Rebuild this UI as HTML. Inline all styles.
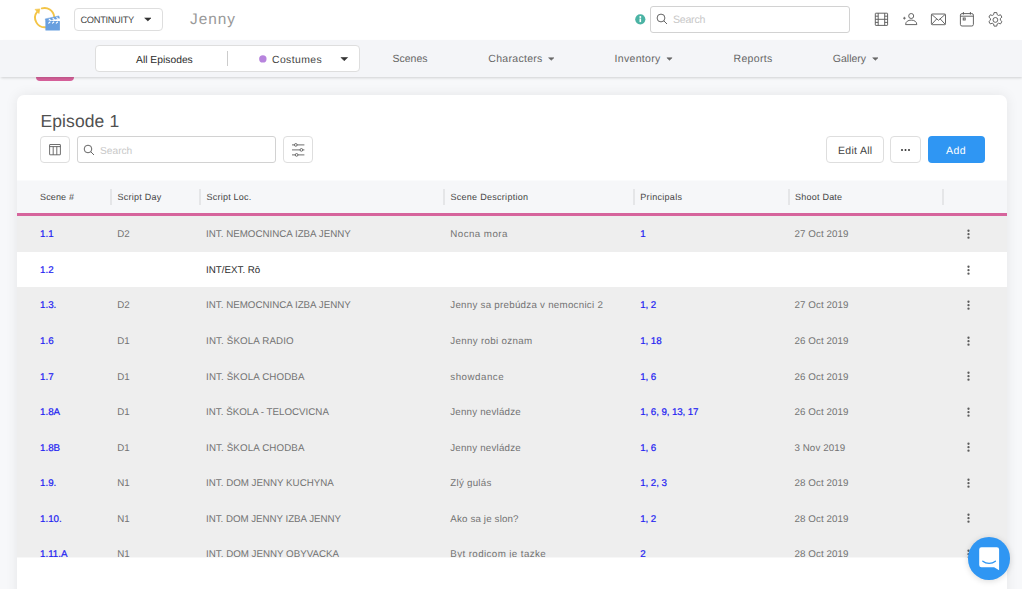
<!DOCTYPE html>
<html lang="en">
<head>
<meta charset="utf-8">
<title>Jenny - Continuity</title>
<style>
*{box-sizing:border-box;margin:0;padding:0}
html,body{width:1022px;height:589px;overflow:hidden}
body{background:#f7f8fa;font-family:"Liberation Sans",sans-serif;color:#555;position:relative;text-rendering:geometricPrecision}
.abs{position:absolute}
#header{position:absolute;left:0;top:0;width:1022px;height:40px;background:#fff}
#nav{position:absolute;left:0;top:40px;width:1022px;height:37px;background:#f4f5f8;box-shadow:0 1.5px 2.5px -0.5px rgba(0,0,0,.16);z-index:3}
.t{position:absolute;white-space:nowrap;line-height:1}
.btn{position:absolute;border:1px solid #dedede;border-radius:4px;background:#fff}
#card{position:absolute;left:17px;top:94.700px;width:990.300px;height:520px;background:#fff;border-radius:7px;box-shadow:0 0 13px rgba(0,0,0,.08)}
#thead{position:absolute;left:17px;top:181px;width:990.400px;height:32px;background:#f6f7f9}
#pink{position:absolute;left:17px;top:213px;width:990.400px;height:3px;background:#d6649c}
.sep{position:absolute;top:189px;width:2px;height:16px;background:#e5e6e8}
.th{position:absolute;top:192px;font-size:9px;color:#444;white-space:nowrap;line-height:10px;letter-spacing:.23px}
#tbody{position:absolute;left:17px;top:216px;width:990.400px;height:342px;overflow:hidden}
.row{position:relative;height:35.55px;background:#eee;width:991px}
.row.w{background:#fff}
.row span{position:absolute;top:13.400px;font-size:9.750px;line-height:12px;white-space:nowrap;color:#737373}
.row.w span{color:#2e2e2e}
.row span.l{color:#2222f2 !important;-webkit-text-stroke:0.22px #2222f2}
.c1{left:23px}.c2{left:100.200px}.c3{left:189.100px}.c4{left:433.300px}.c5{left:623.300px;letter-spacing:-0.100px}.c6{left:777.400px;letter-spacing:0.100px}
.kb{position:absolute;left:949px;top:12px;fill:#5c5c5c}
</style>
</head>
<body>

<div id="header">
  <!-- logo -->
  <svg class="abs" style="left:28px;top:2px" width="40" height="34" viewBox="28 2 40 34">
    <path d="M41.8 8.4 A9.6 9.6 0 0 1 54.1 16.4" fill="none" stroke="#f3c446" stroke-width="1.9" stroke-linecap="round"/>
    <path d="M46 27.2 A9.6 9.6 0 0 1 37.3 11.6" fill="none" stroke="#f3c446" stroke-width="1.9"/>
    <path d="M35 9.4 L39.8 8.9 L39 13.600 Z" fill="#f3c446" stroke="#f3c446" stroke-width="0.6" stroke-linejoin="round"/>
    <rect x="45.4" y="20.9" width="14.5" height="9.7" rx="0.6" fill="#689fdf"/>
    <path d="M45.2 18.9 L58.9 15.9 L59.5 18.3 L45.8 21.3 Z" fill="#689fdf" stroke="#689fdf" stroke-width="0.5" stroke-linejoin="round"/>
    <path d="M49.2 19.3l1.3 1M53 18.5l1.3 1M56.8 17.6l1.300 1" stroke="#fff" stroke-width="1.1" stroke-linecap="round"/>
    <path d="M50 22l-1.300 1.100M53.800 22l-1.300 1.100M57.600 22l-1.300 1.100" stroke="#fff" stroke-width="1.100" stroke-linecap="round"/>
  </svg>
  <div class="btn" style="left:74px;top:8px;width:88.5px;height:23px;border-radius:4px"></div>
  <div class="t" style="left:80.500px;top:15.600px;font-size:9.300px;color:#444;letter-spacing:-0.340px">CONTINUITY</div>
  <svg class="abs" style="left:142px;top:15px" width="12" height="9" viewBox="142 15 12 9"><path d="M144.70 18.00H151.00L147.85 20.90Z" fill="#333" stroke="#333" stroke-width="0.6" stroke-linejoin="round"/></svg>
  <div class="t" style="left:190px;top:12.1px;font-size:15.400px;color:#999;letter-spacing:1px">Jenny</div>

  <!-- info dot -->
  <svg class="abs" style="left:635px;top:14px" width="11" height="11" viewBox="0 0 11 11"><circle cx="5.300" cy="5.300" r="5.100" fill="#4bb3a4"/><rect x="4.500" y="4.500" width="1.600" height="3.600" fill="#fff"/><circle cx="5.300" cy="2.900" r="1" fill="#fff"/></svg>
  <div class="btn" style="left:650px;top:5.500px;width:200px;height:27px;border-radius:3px;border-color:#d2d2d2"></div>
  <svg class="abs" style="left:656px;top:13.100px" width="12" height="12" viewBox="0 0 12 12"><circle cx="5" cy="5" r="3.900" fill="none" stroke="#555" stroke-width="0.900"/><path d="M7.800 7.800L11 11" stroke="#555" stroke-width="0.900"/></svg>
  <div class="t" style="left:673px;top:15px;font-size:10.600px;color:#c8c8c8;letter-spacing:-0.250px">Search</div>

  <!-- right icons -->
  <svg class="abs" style="left:872px;top:10px" width="20" height="20" viewBox="872 10 20 20" fill="none" stroke="#555" stroke-width="0.9">
    <rect x="875.3" y="13.2" width="12.3" height="12.200" rx="0.500"/><path d="M878.200 13.200v12.200M884.700 13.200v12.200M878.200 19.300h6.500M875.300 16.200h2.900M875.300 19.300h2.900M875.300 22.400h2.900M884.700 16.200h2.900M884.700 19.300h2.900M884.700 22.400h2.900"/>
  </svg>
  <svg class="abs" style="left:902px;top:12px" width="16" height="15" viewBox="0 0 16 15" fill="none" stroke="#555" stroke-width="0.9">
    <circle cx="9.2" cy="4.000" r="2.500"/><path d="M3.600 12.600c0-3 2.500-4.500 5.600-4.500s5.600 1.500 5.600 4.500z" stroke-linejoin="round"/><path d="M1 6.200h2.800M2.400 4.800v2.800" stroke-width="0.800"/>
  </svg>
  <svg class="abs" style="left:930px;top:12px" width="17" height="15" viewBox="0 0 17 15" fill="none" stroke="#555" stroke-width="0.900">
    <rect x="1.400" y="2" width="14.100" height="10.700" rx="1"/><path d="M1.700 2.400L8.450 8.300L15.200 2.400M1.700 12.300L6.700 6.900M15.200 12.300L10.200 6.900"/>
  </svg>
  <svg class="abs" style="left:959px;top:11px" width="16" height="17" viewBox="0 0 16 17" fill="none" stroke="#555" stroke-width="0.900">
    <rect x="1.400" y="2.600" width="13" height="12.400" rx="1.600"/><path d="M1.400 5.200h13M4.400 1v2.600M11.400 1v2.600"/><rect x="4.200" y="7" width="2" height="2"/>
  </svg>
  <svg class="abs" style="left:986.600px;top:10.700px" width="16.800" height="17.850" viewBox="0 0 16 17" fill="none" stroke="#555" stroke-width="0.850">
    <circle cx="8" cy="8.500" r="2.300"/>
    <path d="M6.700 1.500h2.600l.4 2 1.300.750 1.900-.650 1.300 2.250-1.500 1.350v1.500l1.500 1.350-1.300 2.250-1.900-.650-1.300.750-.4 2H6.700l-.4-2-1.300-.750-1.900.650-1.300-2.250 1.500-1.350v-1.500L1.800 5.850l1.300-2.250 1.900.650 1.300-.750z" stroke-linejoin="round"/>
  </svg>
</div>

<div id="nav">
  <div class="btn" style="left:95px;top:4.600px;width:265px;height:27px;border-radius:4px;border-color:#dedede"></div>
  <div class="abs" style="left:227px;top:11px;width:1px;height:15px;background:#ccc"></div>
  <div class="t" style="left:136px;top:16px;font-size:10.300px;color:#2c2c2c;letter-spacing:0.010px">All Episodes</div>
  <svg class="abs" style="left:257px;top:13px" width="12" height="12" viewBox="257 53 12 12"><circle cx="262.850" cy="58.900" r="3.700" fill="#b784dd"/></svg>
  <div class="t" style="left:272px;top:16px;font-size:10.400px;color:#444;letter-spacing:0.420px">Costumes</div>
  <svg class="abs" style="left:338px;top:15px" width="12" height="9" viewBox="338 15 12 9"><path d="M341.00 17.50H347.60L344.30 20.80Z" fill="#333" stroke="#333" stroke-width="0.6" stroke-linejoin="round"/></svg>
  <div class="t" style="left:392.500px;top:13.9px;font-size:10.500px;color:#666">Scenes</div>
  <div class="t" style="left:488.300px;top:13.9px;font-size:10.500px;color:#666;letter-spacing:0.300px">Characters</div>
  <svg class="abs" style="left:546px;top:15px" width="12" height="9" viewBox="546 15 12 9"><path d="M548.60 17.80H553.90L551.25 20.30Z" fill="#666" stroke="#666" stroke-width="0.6" stroke-linejoin="round"/></svg>
  <div class="t" style="left:614.500px;top:13.9px;font-size:10.500px;color:#666;letter-spacing:0.320px">Inventory</div>
  <svg class="abs" style="left:664px;top:15px" width="12" height="9" viewBox="664 15 12 9"><path d="M666.90 17.80H672.10L669.50 20.30Z" fill="#666" stroke="#666" stroke-width="0.6" stroke-linejoin="round"/></svg>
  <div class="t" style="left:733.500px;top:13.9px;font-size:10.500px;color:#666;letter-spacing:0.350px">Reports</div>
  <div class="t" style="left:832.800px;top:13.9px;font-size:10.500px;color:#666">Gallery</div>
  <svg class="abs" style="left:870px;top:15px" width="12" height="9" viewBox="870 15 12 9"><path d="M872.70 17.80H878.00L875.35 20.30Z" fill="#666" stroke="#666" stroke-width="0.6" stroke-linejoin="round"/></svg>
</div>
<div class="abs" style="left:36px;top:70px;width:38px;height:11px;border-radius:4px;background:#d6609a;z-index:2"></div>

<div id="card"></div>
<div class="t" style="left:40.500px;top:112.9px;font-size:17.500px;color:#505050;letter-spacing:0.100px">Episode 1</div>

<div class="btn" style="left:40px;top:136px;width:30px;height:27px"></div>
<svg class="abs" style="left:46px;top:141px" width="18" height="18" viewBox="46 141 18 18" fill="none" stroke="#555" stroke-width="0.850"><rect x="49.600" y="144.500" width="10.800" height="10.300" rx="0.300"/><path d="M49.600 146.600h10.800M53.200 146.600v8.200M56.800 146.600v8.200"/></svg>
<div class="btn" style="left:77px;top:136px;width:199px;height:27px;border-radius:3px;border-color:#d2d2d2"></div>
<svg class="abs" style="left:83px;top:144px" width="12" height="12" viewBox="0 0 12 12"><circle cx="5" cy="5" r="3.800" fill="none" stroke="#555" stroke-width="0.900"/><path d="M7.800 7.800L11 11" stroke="#555" stroke-width="0.900"/></svg>
<div class="t" style="left:100px;top:146.5px;font-size:10.200px;color:#c8c8c8">Search</div>
<div class="btn" style="left:283px;top:136px;width:30px;height:27px"></div>
<svg class="abs" style="left:289px;top:141px" width="18" height="18" viewBox="289 141 18 18" fill="none" stroke="#555" stroke-width="0.850"><path d="M292 144.900h12.400M292 149.900h12.400M292 154.900h12.400"/><circle cx="295.800" cy="144.900" r="1.350" fill="#fff"/><circle cx="301.400" cy="149.900" r="1.350" fill="#fff"/><circle cx="296.600" cy="154.900" r="1.350" fill="#fff"/></svg>

<div class="btn" style="left:826px;top:136px;width:58px;height:27px"></div>
<div class="t" style="left:838px;top:146px;font-size:10.500px;color:#444;letter-spacing:0.300px">Edit All</div>
<div class="btn" style="left:890px;top:136px;width:31px;height:27px"></div>
<div class="abs" style="left:901px;top:149px;width:2px;height:2px;border-radius:1px;background:#333;box-shadow:3.500px 0 0 #333,7px 0 0 #333"></div>
<div class="abs" style="left:928px;top:136px;width:57px;height:27px;border-radius:4px;background:#2f96f3"></div>
<div class="t" style="left:946px;top:146px;font-size:10.500px;color:#fff;letter-spacing:0.400px">Add</div>

<div class="abs" style="left:17px;top:180px;width:990.300px;height:1px;background:#f6f7f9;opacity:.55"></div>
<div id="thead"></div>
<div id="pink"></div>
<div class="th" style="left:40px;letter-spacing:.150px">Scene #</div>
<div class="sep" style="left:110px"></div>
<div class="th" style="left:117.600px">Script Day</div>
<div class="sep" style="left:199px"></div>
<div class="th" style="left:206.500px">Script Loc.</div>
<div class="sep" style="left:443px"></div>
<div class="th" style="left:450.400px;letter-spacing:.290px">Scene Description</div>
<div class="sep" style="left:633px"></div>
<div class="th" style="left:640.300px;letter-spacing:.290px">Principals</div>
<div class="sep" style="left:788px"></div>
<div class="th" style="left:795px">Shoot Date</div>
<div class="sep" style="left:942px"></div>

<div id="tbody">
  <div class="row"><span class="c1 l">1.1</span><span class="c2">D2</span><span class="c3">INT. NEMOCNINCA IZBA JENNY</span><span class="c4" style="letter-spacing:0.44px">Nocna mora</span><span class="c5 l">1</span><span class="c6">27 Oct 2019</span><svg class="kb" width="5" height="13" viewBox="0 0 5 13"><circle cx="2.500" cy="2.750" r="1.150"/><circle cx="2.500" cy="6.200" r="1.150"/><circle cx="2.500" cy="9.700" r="1.150"/></svg></div>
  <div class="row w"><span class="c1 l">1.2</span><span class="c2"></span><span class="c3">INT/EXT. Rô</span><span class="c4"></span><span class="c5 l"></span><span class="c6"></span><svg class="kb" width="5" height="13" viewBox="0 0 5 13"><circle cx="2.500" cy="2.750" r="1.150"/><circle cx="2.500" cy="6.200" r="1.150"/><circle cx="2.500" cy="9.700" r="1.150"/></svg></div>
  <div class="row"><span class="c1 l">1.3.</span><span class="c2">D2</span><span class="c3">INT. NEMOCNINCA IZBA JENNY</span><span class="c4" style="letter-spacing:0.26px">Jenny sa prebúdza v nemocnici 2</span><span class="c5 l">1, 2</span><span class="c6">27 Oct 2019</span><svg class="kb" width="5" height="13" viewBox="0 0 5 13"><circle cx="2.500" cy="2.750" r="1.150"/><circle cx="2.500" cy="6.200" r="1.150"/><circle cx="2.500" cy="9.700" r="1.150"/></svg></div>
  <div class="row"><span class="c1 l">1.6</span><span class="c2">D1</span><span class="c3" style="letter-spacing:0.13px">INT. ŠKOLA RADIO</span><span class="c4" style="letter-spacing:0.33px">Jenny robi oznam</span><span class="c5 l">1, 18</span><span class="c6">26 Oct 2019</span><svg class="kb" width="5" height="13" viewBox="0 0 5 13"><circle cx="2.500" cy="2.750" r="1.150"/><circle cx="2.500" cy="6.200" r="1.150"/><circle cx="2.500" cy="9.700" r="1.150"/></svg></div>
  <div class="row"><span class="c1 l">1.7</span><span class="c2">D1</span><span class="c3" style="letter-spacing:0.12px">INT. ŠKOLA CHODBA</span><span class="c4" style="letter-spacing:0.50px">showdance</span><span class="c5 l">1, 6</span><span class="c6">26 Oct 2019</span><svg class="kb" width="5" height="13" viewBox="0 0 5 13"><circle cx="2.500" cy="2.750" r="1.150"/><circle cx="2.500" cy="6.200" r="1.150"/><circle cx="2.500" cy="9.700" r="1.150"/></svg></div>
  <div class="row"><span class="c1 l">1.8A</span><span class="c2">D1</span><span class="c3">INT. ŠKOLA - TELOCVICNA</span><span class="c4" style="letter-spacing:0.20px">Jenny nevládze</span><span class="c5 l">1, 6, 9, 13, 17</span><span class="c6">26 Oct 2019</span><svg class="kb" width="5" height="13" viewBox="0 0 5 13"><circle cx="2.500" cy="2.750" r="1.150"/><circle cx="2.500" cy="6.200" r="1.150"/><circle cx="2.500" cy="9.700" r="1.150"/></svg></div>
  <div class="row"><span class="c1 l">1.8B</span><span class="c2">D1</span><span class="c3" style="letter-spacing:0.12px">INT. ŠKOLA CHODBA</span><span class="c4" style="letter-spacing:0.20px">Jenny nevládze</span><span class="c5 l">1, 6</span><span class="c6">3 Nov 2019</span><svg class="kb" width="5" height="13" viewBox="0 0 5 13"><circle cx="2.500" cy="2.750" r="1.150"/><circle cx="2.500" cy="6.200" r="1.150"/><circle cx="2.500" cy="9.700" r="1.150"/></svg></div>
  <div class="row"><span class="c1 l">1.9.</span><span class="c2">N1</span><span class="c3">INT. DOM JENNY KUCHYNA</span><span class="c4" style="letter-spacing:0.25px">Zlý gulás</span><span class="c5 l">1, 2, 3</span><span class="c6">28 Oct 2019</span><svg class="kb" width="5" height="13" viewBox="0 0 5 13"><circle cx="2.500" cy="2.750" r="1.150"/><circle cx="2.500" cy="6.200" r="1.150"/><circle cx="2.500" cy="9.700" r="1.150"/></svg></div>
  <div class="row"><span class="c1 l">1.10.</span><span class="c2">N1</span><span class="c3" style="letter-spacing:-0.04px">INT. DOM JENNY IZBA JENNY</span><span class="c4" style="letter-spacing:0.15px">Ako sa je slon?</span><span class="c5 l">1, 2</span><span class="c6">28 Oct 2019</span><svg class="kb" width="5" height="13" viewBox="0 0 5 13"><circle cx="2.500" cy="2.750" r="1.150"/><circle cx="2.500" cy="6.200" r="1.150"/><circle cx="2.500" cy="9.700" r="1.150"/></svg></div>
  <div class="row"><span class="c1 l">1.11.A</span><span class="c2">N1</span><span class="c3">INT. DOM JENNY OBYVACKA</span><span class="c4" style="letter-spacing:0.40px">Byt rodicom je tazke</span><span class="c5 l">2</span><span class="c6">28 Oct 2019</span><svg class="kb" width="5" height="13" viewBox="0 0 5 13"><circle cx="2.500" cy="2.750" r="1.150"/><circle cx="2.500" cy="6.200" r="1.150"/><circle cx="2.500" cy="9.700" r="1.150"/></svg></div>
</div>

<div class="abs" style="left:17px;top:557px;width:990.300px;height:1px;background:#fff;opacity:.5"></div>
<!-- chat bubble -->
<div class="abs" style="left:967.700px;top:537px;width:42.700px;height:42.700px;border-radius:50%;background:#2f96f3;box-shadow:0 1px 6px rgba(0,0,0,.15);z-index:5"></div>
<svg class="abs" style="left:976px;top:544px;z-index:6" width="26" height="30" viewBox="976 544 26 30"><path d="M981.500 547.300h15.300a2.300 2.300 0 0 1 2.300 2.300V570.300l-5-3.100H981.500a2.300 2.300 0 0 1 -2.300-2.300V549.600a2.300 2.300 0 0 1 2.300-2.300z" fill="#fff"/><path d="M982.800 561.200c3.600 2.900 9 2.900 12.600 0" fill="none" stroke="#2f96f3" stroke-width="1.300" stroke-linecap="round"/></svg>

</body>
</html>
